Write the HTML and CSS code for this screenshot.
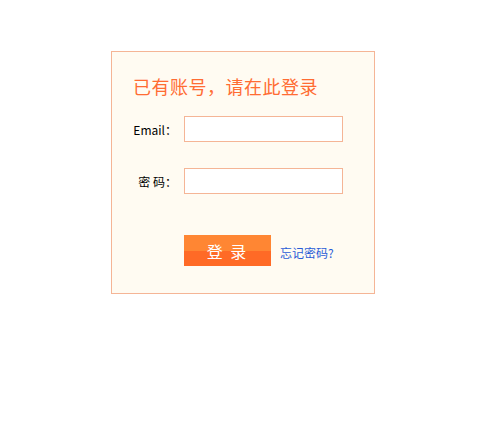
FILE: index.html
```html
<!DOCTYPE html>
<html lang="zh-CN">
<head>
<meta charset="UTF-8">
<title>登录</title>
<link rel="stylesheet" href="styles.css">
</head>
<body>
  <div class="login-box">
    <div class="title">已有账号，请在此登录</div>
    <form class="login-form">
      <div class="row">
        <label class="label">Email：</label>
        <input class="field" type="text">
      </div>
      <div class="row">
        <label class="label">密 码：</label>
        <input class="field" type="password">
      </div>
      <div class="row actions">
        <button class="btn-login" type="button">登 录</button>
        <a class="forget" href="#">忘记密码?</a>
      </div>
    </form>
  </div>
</body>
</html>
```

FILE: styles.css
```css
body {
  margin: 0;
  background: #fff;
  font-family: "Noto Sans CJK SC", "DejaVu Sans", sans-serif;
}

.login-box {
  width: 262px;
  height: 241px;
  margin: 51px 0 0 111px;
  border: 1px solid #f5b596;
  background-color: #fffbf2;
}

.title {
  color: #ff6c33;
  font-size: 18px;
  line-height: 24px;
  letter-spacing: 0.5px;
  margin: 22px 0 0 21px;
}

.login-form {
  margin-top: 18px;
}

.row {
  display: flex;
  align-items: center;
  height: 26px;
  margin-bottom: 26px;
}

.label {
  width: 65px;
  text-align: right;
  font-size: 12px;
  color: #000;
  padding-right: 7px;
}

.field {
  box-sizing: border-box;
  width: 159px;
  height: 26px;
  margin: 0;
  border: 1px solid #f5b596;
  background: #fff;
  outline: none;
}

.actions {
  height: 31px;
  margin-top: 41px;
  padding-left: 72px;
  align-items: flex-end;
}

.btn-login {
  width: 87px;
  height: 31px;
  border: none;
  padding: 0;
  background: linear-gradient(#ff8633 0, #ff8633 50%, #ff6a26 50%, #ff6a26 100%);
  color: #fff;
  font-family: "Noto Sans CJK SC", sans-serif;
  font-size: 16px;
  letter-spacing: 2px;
  cursor: pointer;
}

.forget {
  margin: 0 0 5px 9px;
  font-size: 12px;
  color: #2a5bd7;
  text-decoration: none;
}
```
